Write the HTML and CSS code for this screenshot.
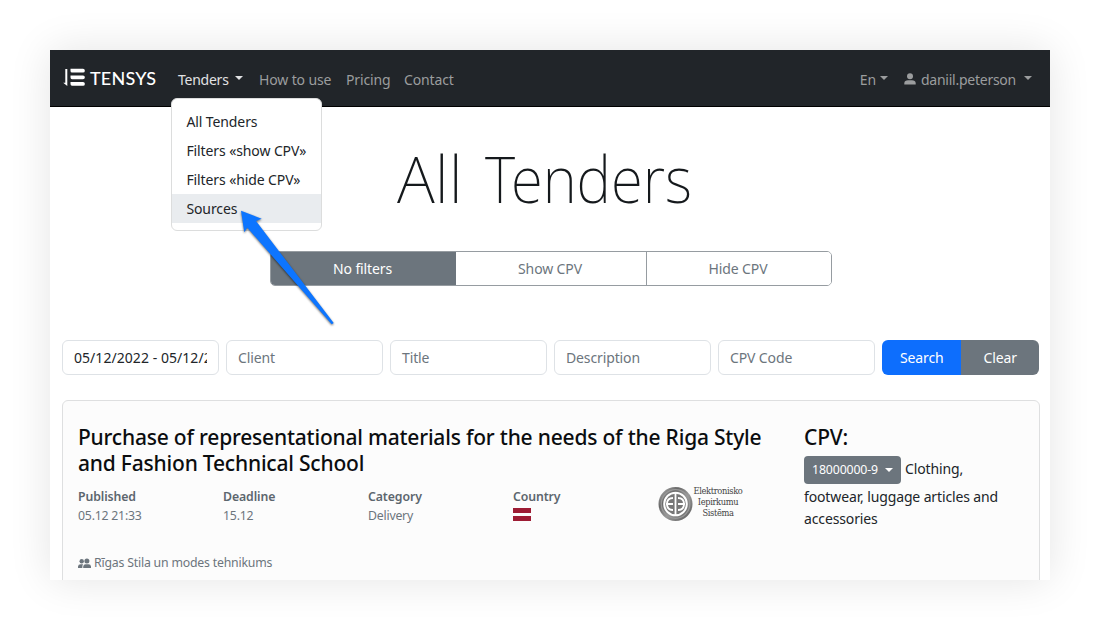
FILE: index.html
```
<!DOCTYPE html>
<html lang="en">
<head>
<meta charset="utf-8">
<title>All Tenders</title>
<link rel="stylesheet" href="styles.css">
</head>
<body>
<div class="window">
  <header class="navbar">
    <a class="brand">
      <svg class="brand-mark" width="23" height="19" viewBox="0 0 23 19" fill="#fff"><path d="M2.300 1h2v17L.2 14.800h2.100zM7.500 .8h12.500q1.800 0 1.800 1.600v.6q0 1.600-1.800 1.600H9Q7.500 4.400 7.500 2.900zM7.500 7.400h12.500q1.800 0 1.800 1.600v.6q0 1.600-1.800 1.600H9Q7.500 11 7.500 9.500zM7.500 14h12.500q1.800 0 1.800 1.600v.6q0 1.600-1.800 1.600H9Q7.500 17.600 7.500 16.100z"/></svg>
      <span class="brand-name">TENSYS</span>
    </a>
    <nav class="menu">
      <div class="menu-item menu-tenders active"><span>Tenders</span><i class="caret"></i>
        <div class="dropdown">
          <a>All Tenders</a>
          <a>Filters «show CPV»</a>
          <a>Filters «hide CPV»</a>
          <a class="selected">Sources</a>
        </div>
      </div>
      <a class="menu-item menu-how">How to use</a>
      <a class="menu-item menu-pricing">Pricing</a>
      <a class="menu-item">Contact</a>
    </nav>
    <div class="account">
      <a class="language"><span>En</span><i class="caret"></i></a>
      <a class="user">
        <svg width="12" height="12" viewBox="0 0 12 12" fill="currentColor"><circle cx="6" cy="3.300" r="3"/><path d="M.3 11.500V10Q.6 7.200 4 7.200h4q3.400 0 3.700 2.800v1.500z"/></svg>
        <span>daniil.peterson</span><i class="caret"></i>
      </a>
    </div>
  </header>

  <main class="content">
    <h1><span>All</span> <span class="narrow">Tenders</span></h1>
    <div class="filters">
      <button class="on">No filters</button><button>Show CPV</button><button>Hide CPV</button>
    </div>
    <div class="search">
      <div class="field filled"><span>05/12/2022 - 05/12/2022</span></div>
      <div class="field">Client</div>
      <div class="field">Title</div>
      <div class="field">Description</div>
      <div class="field">CPV Code</div>
      <div class="actions"><button class="primary">Search</button><button>Clear</button></div>
    </div>

    <article class="card">
      <section class="tender">
        <h2>Purchase of representational materials for the needs of the Riga Style<br>and Fashion Technical School</h2>
        <div class="facts">
          <div><b>Published</b><span>05.12 21:33</span></div>
          <div><b>Deadline</b><span>15.12</span></div>
          <div><b>Category</b><span>Delivery</span></div>
          <div><b>Country</b><i class="flag"></i></div>
          <div class="source">
            <svg width="35" height="36" viewBox="0 0 35 36">
              <defs><linearGradient id="metal" x2="1" y2="1"><stop stop-color="#bbb"/><stop offset=".3" stop-color="#686868"/><stop offset=".55" stop-color="#999"/><stop offset="1" stop-color="#555"/></linearGradient></defs>
              <circle cx="17.500" cy="18" r="17" fill="url(#metal)"/>
              <circle cx="17.500" cy="18" r="14.300" fill="none" stroke="#999" stroke-width="1.300"/>
              <circle cx="17.500" cy="18" r="11.300" fill="#777" stroke="#fff" stroke-width="2"/>
              <path d="M17.500 7v22M15 12q-6 0-6 6t6 6M8 18h7M20 12q6 0 6 6t-6 6M20 18h7" fill="none" stroke="#fff" stroke-width="1.800"/>
            </svg>
            <p>Elektronisko<br>Iepirkumu<br>Sistēma</p>
          </div>
        </div>
        <div class="client">
          <svg width="13" height="11" viewBox="0 0 13 11" fill="currentColor"><circle cx="3.700" cy="3.300" r="2.200"/><circle cx="8.900" cy="3.100" r="2.500"/><path d="M0 10V8.500Q.2 6.300 2.700 6.300h2.400Q4.300 7 4.300 10zM5.200 10V8.600Q5.500 6.300 7.500 6.300h3q2.300 0 2.500 2.300V10z"/></svg>
          <span>Rīgas Stila un modes tehnikums</span>
        </div>
      </section>
      <aside class="cpv">
        <h3>CPV:</h3>
        <div class="cpv-first"><button><span>18000000-9</span><i class="caret"></i></button><span>Clothing,</span></div>
        <p>footwear, luggage articles and<br>accessories</p>
      </aside>
    </article>
  </main>

  <svg class="pointer" width="100" height="122" viewBox="0 0 100 122"><path d="M4 4.700 24.700 12.700 19 15 96.700 117 94.700 118.300 10.300 21.700 7.300 26.300z" fill="#0d75ff"/></svg>
</div>
</body>
</html>
```
FILE: styles.css
```
* { box-sizing: border-box; }
body {
  margin: 0;
  padding: 50px;
  height: 630px;
  overflow: hidden;
  background: #fff;
  color: #212529;
  font: 14px/22px "Noto Sans", "Open Sans", sans-serif;
  letter-spacing: -.13px;
}
h1, h2, h3, p { margin: 0; }
button { font: inherit; letter-spacing: inherit; padding: 0; border: 0; color: inherit; }
svg { display: block; flex: none; }

.window {
  position: relative;
  width: 1000px;
  height: 530px;
  background: #fff;
  box-shadow: 0 0 40px rgba(0, 0, 0, .11);
}
.caret {
  display: inline-block;
  flex: none;
  border: 4.5px solid transparent;
  border-top-color: currentColor;
  border-bottom: 0;
}

/* Top bar */
.navbar {
  display: flex;
  align-items: center;
  height: 57px;
  padding: 0 18px 0 13px;
  background: #212529;
  border-bottom: 1px solid #000;
  color: #9b9d9e;
  white-space: nowrap;
}
.brand { display: flex; align-items: center; width: 115px; gap: 4px; color: #fff; padding-bottom: 1px; }
.brand-name { font: 500 18px/22px Lato, sans-serif; letter-spacing: .2px; }
.menu { display: flex; }
.menu-item { position: relative; padding-top: 3px; }
.menu-item.active { color: #e1e2e3; }
.menu-tenders { display: flex; align-items: center; gap: 6px; width: 81px; letter-spacing: -.25px; }
.menu-tenders > .caret { margin-top: -3px; }
.menu-how { width: 87px; }
.menu-pricing { width: 58px; }
.dropdown {
  position: absolute;
  z-index: 2;
  left: -7px;
  top: 32px;
  width: 151px;
  height: 133px;
  padding: 8px 0;
  background: #fff;
  border: 1px solid #dcdddd;
  border-radius: 6px;
  color: #212529;
  letter-spacing: -.1px;
}
.dropdown a { display: block; height: 29px; line-height: 29px; padding-left: 14.4px; }
.dropdown .selected { background: #e9ecef; }
.account { display: flex; margin-left: auto; padding-top: 3px; }
.account .caret { margin-top: -3px; }
.language { display: flex; align-items: center; gap: 4px; margin-right: 16px; }
.user { display: flex; align-items: center; gap: 5px; letter-spacing: -.25px; }
.user svg { margin-top: -2px; }
.user .caret { margin-left: 3px; }

/* Page */
.content { display: flex; flex-direction: column; height: 473px; padding: 31px 10px 0 12px; overflow: hidden; }
h1 { flex: none; display: flex; gap: 22px; height: 84px; padding-left: 335px; color: #15191c; font-size: 64px; line-height: 82px; font-weight: 250; letter-spacing: 0; }
h1 .narrow { transform: scaleX(.91); transform-origin: left; }
.filters { flex: none; display: grid; grid-template-columns: 185px 190px 185px; grid-template-rows: 33px; width: 562px; height: 35px; margin: 29px 0 0 208px; border: 1px solid #969ca1; border-radius: 5px; overflow: hidden; }
.filters button { background: #fff; color: #6c757d; padding: 1px 2px 0 0; }
.filters button + button + button { border-left: 1px solid #969ca1; }
.filters .on { background: #6c757d; color: #fff; }
.search { flex: none; display: grid; grid-template-columns: repeat(6, 157px); gap: 7px; height: 35px; margin-top: 54px; }
.field { border: 1px solid #dee2e6; border-radius: 6px; padding: 1px 11px 0; line-height: 32px; color: #6c757d; white-space: nowrap; }
.field.filled { color: #212529; letter-spacing: .05px; }
.field.filled span { display: block; height: 32px; overflow: hidden; }
.actions { display: flex; border-radius: 6px; overflow: hidden; color: #fff; }
.actions button { flex: 1; background: #6c757d; padding: 1px 0 0 1px; }
.actions .primary { background: #0d6efd; }

/* Tender card */
.card { display: flex; flex: none; height: 220px; margin-top: 25px; padding: 23px 15px; border: 1px solid #dedfe0; border-radius: 6px; background: #fcfcfc; width: 978px; }
.tender { width: 726px; color: #6c757d; }
h2, h3 { color: #0b0d0f; font-size: 21px; line-height: 26px; font-weight: 500; white-space: nowrap; letter-spacing: -.2px; }
.facts { display: grid; grid-template-columns: repeat(5, 145px); margin-top: 11px; height: 38px; font-size: 12.3px; line-height: 19px; letter-spacing: -.22px; }
.facts b, .facts span { display: block; }
.facts b { font-weight: 600; color: #5c666e; letter-spacing: -.1px; }
.flag { display: block; width: 18px; height: 13px; margin-top: 2px; background: linear-gradient(#9d1c34 5px, #fcfcfc 5px 8px, #9d1c34 8px); }
.source { display: flex; align-items: center; height: 34px; }
.source p { width: 52px; margin: -3px 0 0 -1px; font: 8.3px/11px "DejaVu Serif", serif; letter-spacing: -.35px; color: #444; text-align: center; white-space: nowrap; }
.client { display: flex; align-items: center; gap: 3px; margin-top: 28px; font-size: 12.3px; line-height: 20px; letter-spacing: -.2px; }
.cpv { width: 220px; white-space: nowrap; }
.cpv-first { display: flex; gap: 4px; height: 30px; margin-top: 6px; }
.cpv-first > span { padding-top: 2px; }
.cpv button { display: flex; align-items: center; justify-content: center; gap: 7px; width: 97px; height: 28px; border-radius: 4px; background: #6c757d; color: #fff; font-size: 12.3px; }

.pointer { position: absolute; z-index: 5; left: 187px; top: 156px; filter: drop-shadow(0 1px 1px rgba(0, 0, 0, .6)); }
```
